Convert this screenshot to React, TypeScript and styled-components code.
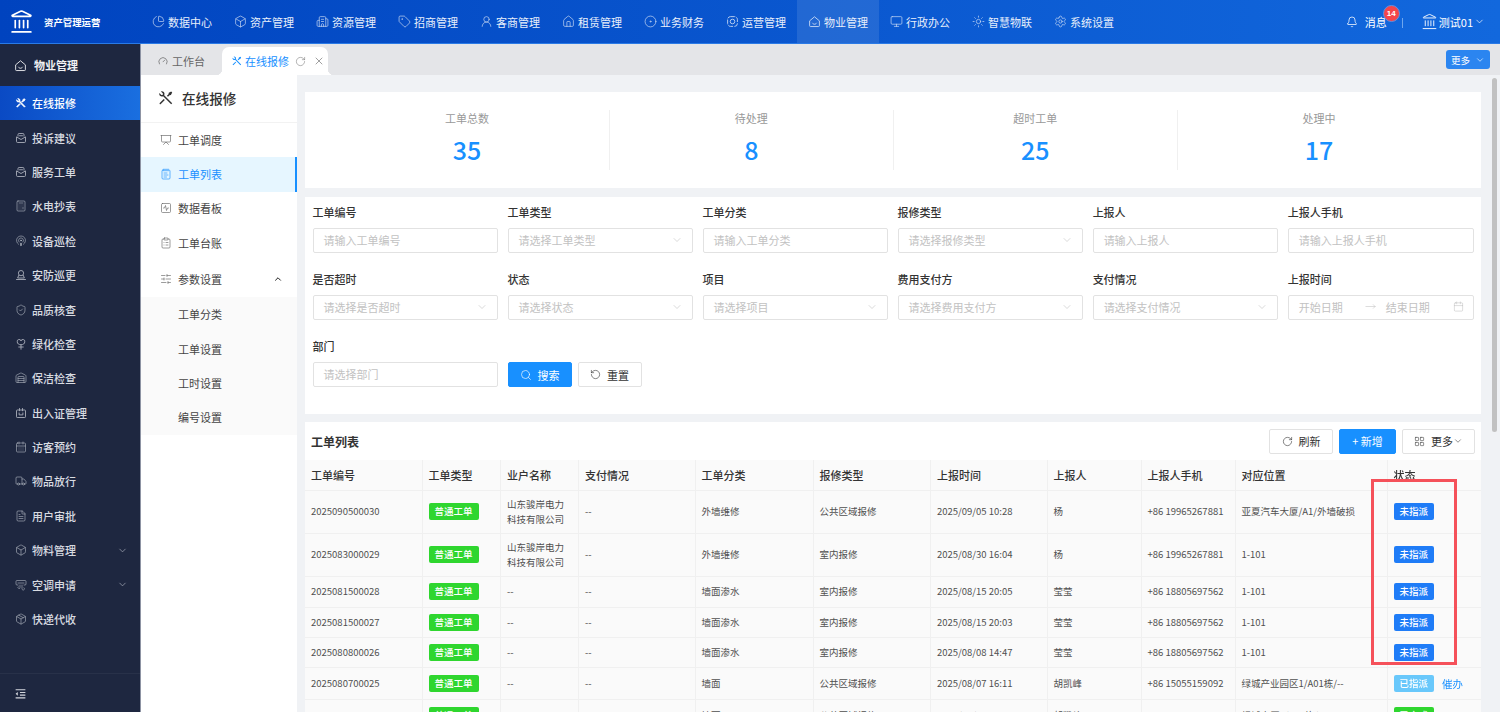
import React from "react";
import styled, { createGlobalStyle } from "styled-components";
import {
  AirVent, Box, Building2, Calculator, Calendar, CalendarDays, ChartPie, ChevronDown, ChevronUp,
  CircleDot, ClipboardList, FileText, Gauge, Landmark, LayoutGrid, MoveRight, NotepadText,
  Package, Podcast, Presentation, RotateCcw, RotateCw, Search, Settings,
  ShieldCheck, SlidersHorizontal, SquareActivity, Bell, Sun, Tag, Truck, UserRound,
  Warehouse, X, House, Monitor,
} from "lucide-react";
import { RiIndentDecrease, RiToolsLine } from "react-icons/ri";

type IconType = React.ComponentType<{ size?: number; strokeWidth?: number }>;

const HouseSmile: IconType = ({ size = 14 }) => (
  <svg width={size} height={size} viewBox="0 0 16 16" fill="none" stroke="currentColor" strokeWidth="1.1">
    <path d="M2 7.2 8 2.2l6 5v6a1 1 0 0 1-1 1H3a1 1 0 0 1-1-1z" strokeLinejoin="round" />
    <path d="M5.5 10c.8 1 1.6 1.4 2.5 1.4s1.7-.4 2.5-1.4" strokeLinecap="round" />
  </svg>
);

const OpsIcon: IconType = ({ size = 14 }) => (
  <svg width={size} height={size} viewBox="0 0 16 16" fill="none" stroke="currentColor" strokeWidth="1.1">
    <rect x="2" y="2" width="12" height="12" rx="3.5" strokeDasharray="6 1.5" />
    <circle cx="8" cy="8" r="2.8" />
  </svg>
);

const MailTray: IconType = ({ size = 14 }) => (
  <svg width={size} height={size} viewBox="0 0 16 16" fill="none" stroke="currentColor" strokeWidth="1.2">
    <path d="M4 6V3.5A1.5 1.5 0 0 1 5.5 2h5A1.5 1.5 0 0 1 12 3.5V6" />
    <path d="M2 6.5 8 10l6-3.5V12.5A1.5 1.5 0 0 1 12.500 14h-9A1.500 1.500 0 0 1 2 12.500z" strokeLinejoin="round" />
    <path d="M5.500 5h5" />
  </svg>
);

const GuardIcon: IconType = ({ size = 14 }) => (
  <svg width={size} height={size} viewBox="0 0 16 16" fill="none" stroke="currentColor" strokeWidth="1.2">
    <circle cx="8" cy="5.500" r="3.500" />
    <path d="M5 8.500 3.500 12h9L11 8.500M2 14h12" strokeLinecap="round" strokeLinejoin="round" />
  </svg>
);

const PlantIcon: IconType = ({ size = 14 }) => (
  <svg width={size} height={size} viewBox="0 0 16 16" fill="none" stroke="currentColor" strokeWidth="1.2">
    <path d="M8 9C5 9 3 7.500 3 5a2.500 2.500 0 0 1 5-1 2.500 2.500 0 0 1 5 1c0 2.500-2 4-5 4z" />
    <path d="M8 9v6M5 12h6" strokeLinecap="round" />
  </svg>
);

const PassIcon: IconType = ({ size = 14 }) => (
  <svg width={size} height={size} viewBox="0 0 16 16" fill="none" stroke="currentColor" strokeWidth="1.2">
    <rect x="2" y="4" width="12" height="10" rx="1" />
    <path d="M6 2v3M10 2v3M5.500 8v2.500h5V8" strokeLinecap="round" />
  </svg>
);

const GlobalStyle = createGlobalStyle`
  html, body, #root { margin: 0; height: 100%; overflow: hidden; }
  body {
    font-family: "Noto Sans CJK SC", "Noto Sans", sans-serif;
    font-size: 11px;
    color: #333;
  }
  * { box-sizing: border-box; }
`;

const Page = styled.div`
  height: 100vh;
  display: flex;
  flex-direction: column;
`;

/* top bar */
const Header = styled.header`
  height: 44px;
  flex: none;
  display: flex;
  align-items: stretch;
  color: #fff;
  background: linear-gradient(90deg, #0043bf, #1268dd);
  border-bottom: 1px solid #2a7ae6;
`;

const Brand = styled.div`
  width: 141px;
  flex: none;
  display: flex;
  align-items: center;
  gap: 10px;
  padding-left: 9px;
  font-size: 9.4px;
  font-weight: 700;
  white-space: nowrap;
`;

const TopNav = styled.nav`
  display: flex;
`;

const TopItem = styled.a<{ $active?: boolean }>`
  width: 82px;
  display: flex;
  align-items: center;
  gap: 3px;
  padding-left: 11px;
  white-space: nowrap;
  color: #e8effb;
  background: ${(p) => (p.$active ? "rgba(255,255,255,.1)" : "transparent")};
  svg { opacity: .85; flex: none; }
`;

const HeaderRight = styled.div`
  margin-left: auto;
  display: flex;
  align-items: center;
  padding-right: 15px;
`;

const MessageLink = styled.div`
  position: relative;
  display: flex;
  align-items: center;
  gap: 7px;
  padding-right: 16px;
  margin-right: 18px;
  &::after {
    content: "";
    position: absolute;
    right: 0;
    top: 4px;
    height: 10px;
    width: 1px;
    background: #6ea6ee;
  }
`;

const Badge = styled.span`
  position: absolute;
  right: 3px;
  top: -9px;
  width: 17px;
  height: 17px;
  border-radius: 50%;
  background: #f5454b;
  border: 1px solid #5b93e6;
  font: 700 8px/15px "Liberation Sans", sans-serif;
  text-align: center;
`;

const UserMenu = styled.div`
  display: flex;
  align-items: center;
  gap: 1px;
`;

/* dark side menu */
const Body = styled.div`
  flex: 1;
  min-height: 0;
  display: flex;
`;

const Sidebar = styled.aside`
  width: 141px;
  flex: none;
  display: flex;
  flex-direction: column;
  background: #1e2740;
  border-right: 1px solid #8d93a3;
  color: #d3d6dd;
`;

const SideHead = styled.div`
  height: 42px;
  flex: none;
  display: flex;
  align-items: center;
  gap: 7px;
  padding-left: 14px;
  font-weight: 700;
  color: #f0f1f4;
`;

const SideList = styled.div`
  flex: 1;
`;

const SideItem = styled.a<{ $active?: boolean }>`
  height: 34.4px;
  display: flex;
  align-items: center;
  gap: 5px;
  padding: 0 12px 0 15px;
  font-weight: 500;
  color: ${(p) => (p.$active ? "#fff" : "#d8dbe1")};
  background: ${(p) => (p.$active ? "linear-gradient(90deg, #0a4ac4, #1a6fe0)" : "transparent")};
  svg { color: ${(p) => (p.$active ? "#fff" : "#a9aeba")}; flex: none; }
  svg:last-child:not(:first-child) { margin-left: auto; }
`;

const SideFoot = styled.div`
  height: 39px;
  flex: none;
  display: flex;
  align-items: center;
  padding-left: 14px;
  border-top: 1px solid #283149;
`;

/* tab strip */
const Right = styled.div`
  flex: 1;
  min-width: 0;
  display: flex;
  flex-direction: column;
`;

const TabBar = styled.div`
  height: 31px;
  flex: none;
  display: flex;
  align-items: flex-end;
  padding-left: 7px;
  gap: 8px;
  background: #e4e5e8;
  position: relative;
`;

const Tab = styled.div`
  height: 28px;
  width: 66px;
  display: flex;
  align-items: center;
  gap: 4px;
  padding-left: 10px;
  color: #666;
  svg { color: #555; }
`;

const ActiveTab = styled.div`
  position: relative;
  height: 28px;
  width: 106px;
  display: flex;
  align-items: center;
  padding-left: 9px;
  background: #fff;
  border-radius: 7px 7px 0 0;
  color: #1890ff;
  &::before, &::after {
    content: "";
    position: absolute;
    bottom: 0;
    width: 6px;
    height: 6px;
  }
  &::before { left: -6px; background: radial-gradient(circle at 0 0, transparent 6px, #fff 6.5px); }
  &::after { right: -6px; background: radial-gradient(circle at 100% 0, transparent 6px, #fff 6.5px); }
`;

const TabTitle = styled.span`
  margin: 0 6px 0 2px;
  white-space: nowrap;
`;

const TabTool = styled.span`
  display: flex;
  color: #777;
  & + & { margin-left: 7px; }
`;

const MoreTabs = styled.button`
  position: absolute;
  right: 10px;
  top: 6px;
  width: 44px;
  height: 19px;
  display: flex;
  align-items: center;
  justify-content: center;
  gap: 5px;
  border: 0;
  border-radius: 3px;
  background: #2b85f0;
  color: #fff;
  font: inherit;
  font-size: 9.5px;
  padding: 0;
`;

/* second level menu */
const Workspace = styled.div`
  position: relative;
  flex: 1;
  min-height: 0;
  display: flex;
`;

const SubMenu = styled.div`
  width: 156px;
  flex: none;
  background: #fff;
`;

const SubTitle = styled.div`
  height: 48px;
  display: flex;
  align-items: center;
  gap: 7px;
  padding: 0 0 2px 16px;
  font-size: 13.6px;
  font-weight: 500;
  color: #333;
  border-bottom: 1px solid #f2f2f2;
`;

const SubItem = styled.a<{ $active?: boolean }>`
  height: 34.4px;
  display: flex;
  align-items: center;
  gap: 6px;
  padding: 0 12px 1px 19px;
  color: ${(p) => (p.$active ? "#1890ff" : "#444")};
  background: ${(p) => (p.$active ? "#e6f6ff" : "transparent")};
  border-right: 2px solid ${(p) => (p.$active ? "#1890ff" : "transparent")};
  svg { color: ${(p) => (p.$active ? "#1890ff" : "#666")}; flex: none; }
`;

const SubGroupHead = styled(SubItem)`
  margin-top: 2px;
  svg:last-child { margin-left: auto; color: #222; }
`;

const SubChildren = styled.div`
  background: #fafafa;
`;

const SubChild = styled.a`
  height: 34.4px;
  display: flex;
  align-items: center;
  padding-left: 37px;
  color: #444;
`;

/* page content */
const Main = styled.main`
  flex: 1;
  min-width: 0;
  overflow-y: auto;
  padding: 17px 19.5px 0 8px;
  background: #f0f2f5;
`;

const ScrollThumb = styled.div`
  position: absolute;
  top: 3px;
  right: 3px;
  width: 5px;
  height: 354px;
  border-radius: 3px;
  background: #c1c1c1;
`;

const StatCard = styled.section`
  height: 96px;
  display: grid;
  grid-template-columns: repeat(4, 1fr);
  padding: 18px 20px;
  background: #fff;
`;

const Stat = styled.div`
  display: flex;
  flex-direction: column;
  align-items: center;
  & + & { border-left: 1px solid #f0f0f0; }
`;

const StatLabel = styled.div`
  color: #999;
  line-height: 16px;
`;

const StatValue = styled.div`
  margin-top: 5px;
  font-size: 25px;
  line-height: 36px;
  font-weight: 500;
  color: #1890ff;
`;

const FilterCard = styled.section`
  margin-top: 9px;
  display: grid;
  grid-template-columns: repeat(6, 1fr);
  gap: 19px 9.2px;
  padding: 8px 7px 27px 7.5px;
  background: #fff;
`;

const Field = styled.div`
  min-width: 0;
`;

const FieldLabel = styled.div`
  height: 16px;
  line-height: 14px;
  margin-bottom: 7px;
  font-weight: 500;
  color: #333;
`;

const InputBox = styled.div`
  height: 25px;
  display: flex;
  align-items: center;
  padding: 0 9px 2px 10px;
  border: 1px solid #e2e2e2;
  border-radius: 2px;
  color: #c2c2c2;
  white-space: nowrap;
  svg { margin-left: auto; color: #b5b5b5; flex: none; }
`;

const DatePart = styled.span`
  width: 66px;
  &:nth-of-type(2) { margin-left: 10px; }
`;

const DateArrow = styled(MoveRight)`
  && { margin: 0; }
`;

const Actions = styled.div`
  grid-column: span 5;
  align-self: end;
  display: flex;
  gap: 6px;
`;

const Button = styled.button<{ $primary?: boolean; $w: number }>`
  width: ${(p) => p.$w}px;
  height: 25px;
  display: inline-flex;
  align-items: center;
  justify-content: center;
  gap: 6px;
  padding: 0;
  border: 1px solid ${(p) => (p.$primary ? "#1890ff" : "#e2e2e2")};
  border-radius: 2px;
  background: ${(p) => (p.$primary ? "#1890ff" : "#fff")};
  color: ${(p) => (p.$primary ? "#fff" : "#333")};
  font: inherit;
`;

const MoreCaret = styled(ChevronDown)`
  margin-left: -6px;
`;

const TableCard = styled.section`
  position: relative;
  margin-top: 8px;
  min-height: 788px;
  background: #fff;
`;

const TableHead = styled.div`
  height: 38px;
  display: flex;
  align-items: center;
  justify-content: space-between;
  padding: 0 5.5px 0 6px;
`;

const TableTitle = styled.h3`
  margin: 0;
  font-size: 12px;
  font-weight: 700;
  color: #333;
`;

const Toolbar = styled.div`
  display: flex;
  gap: 6px;
`;

const Table = styled.table`
  width: 100%;
  table-layout: fixed;
  border-collapse: collapse;
  font-size: 9.5px;
`;

const Th = styled.th`
  height: 30px;
  padding: 0 6px;
  text-align: left;
  font-size: 11px;
  font-weight: 500;
  color: #333;
  background: #fafafa;
  border-right: 1px solid #f0f0f0;
  border-bottom: 1px solid #f0f0f0;
`;

const Row = styled.tr<{ $h: number }>`
  height: ${(p) => p.$h}px;
`;

const Td = styled.td`
  padding: 0 6px;
  color: #505050;
  line-height: 15px;
  background: #fafafa;
  border-right: 1px solid #f0f0f0;
  border-bottom: 1px solid #f0f0f0;
  overflow: hidden;
  white-space: nowrap;
`;

const StatusTh = styled(Th)`
  position: sticky;
  right: 0;
  padding-left: 6px;
  border-right: 0;
  box-shadow: -3px 0 4px rgba(0, 0, 0, .15);
`;

const StatusTd = styled(Td)`
  position: sticky;
  right: 0;
  padding-left: 6px;
  border-right: 0;
  box-shadow: -3px 0 4px rgba(0, 0, 0, .15);
`;

const toneColors = { green: "#2fd62f", blue: "#1f7cf7", sky: "#69c8fb" };

const StatusTag = styled.span<{ $tone: keyof typeof toneColors }>`
  display: inline-block;
  height: 17px;
  padding: 0 6px;
  line-height: 17px;
  border-radius: 2px;
  background: ${(p) => toneColors[p.$tone]};
  color: #fff;
  font-size: 9.5px;
  font-weight: 500;
  vertical-align: middle;
`;

const UrgeLink = styled.a`
  margin-left: 8px;
  font-size: 10.5px;
  color: #1890ff;
  vertical-align: middle;
`;

const Wrapped = styled.div`
  white-space: normal;
`;

const Marker = styled.div`
  position: absolute;
  top: 57px;
  right: 23.5px;
  width: 86px;
  height: 186px;
  border: 3px solid #f5515a;
  pointer-events: none;
`;

const topNav: [string, IconType][] = [
  ["数据中心", ChartPie], ["资产管理", Box], ["资源管理", Building2], ["招商管理", Tag],
  ["客商管理", UserRound], ["租赁管理", House], ["业务财务", CircleDot], ["运营管理", OpsIcon],
  ["物业管理", HouseSmile], ["行政办公", Monitor], ["智慧物联", Sun], ["系统设置", Settings],
];

const sideNav: [string, IconType, boolean?][] = [
  ["在线报修", RiToolsLine], ["投诉建议", MailTray], ["服务工单", MailTray], ["水电抄表", Calculator],
  ["设备巡检", Podcast], ["安防巡更", GuardIcon], ["品质核查", ShieldCheck], ["绿化检查", PlantIcon],
  ["保洁检查", Warehouse], ["出入证管理", PassIcon], ["访客预约", CalendarDays], ["物品放行", Truck],
  ["用户审批", FileText], ["物料管理", Box, true], ["空调申请", AirVent, true], ["快递代收", Package],
];

const subNav: [string, IconType][] = [
  ["工单调度", Presentation], ["工单列表", NotepadText], ["数据看板", SquareActivity], ["工单台账", ClipboardList],
];

const stats = [["工单总数", "35"], ["待处理", "8"], ["超时工单", "25"], ["处理中", "17"]];

type FilterField = { label: string; hint: string; select?: boolean };

const filters: FilterField[] = [
  { label: "工单编号", hint: "请输入工单编号" },
  { label: "工单类型", hint: "请选择工单类型", select: true },
  { label: "工单分类", hint: "请输入工单分类" },
  { label: "报修类型", hint: "请选择报修类型", select: true },
  { label: "上报人", hint: "请输入上报人" },
  { label: "上报人手机", hint: "请输入上报人手机" },
  { label: "是否超时", hint: "请选择是否超时", select: true },
  { label: "状态", hint: "请选择状态", select: true },
  { label: "项目", hint: "请选择项目", select: true },
  { label: "费用支付方", hint: "请选择费用支付方", select: true },
  { label: "支付情况", hint: "请选择支付情况", select: true },
];

const columns: [string, number][] = [
  ["工单编号", 117], ["工单类型", 78.5], ["业户名称", 78], ["支付情况", 116.5], ["工单分类", 118],
  ["报修类型", 117.5], ["上报时间", 116.5], ["上报人", 94], ["上报人手机", 94], ["对应位置", 152],
];

const company = "山东骏岸电力科技有限公司";

type Order = {
  no: string; owner?: string; cat: string; kind: string; time: string; who: string; phone: string; place: string;
  status: string; tone: keyof typeof toneColors; urge?: boolean; h: number;
};

const orders: Order[] = [
  { no: "2025090500030", owner: company, cat: "外墙维修", kind: "公共区域报修", time: "2025/09/05 10:28", who: "杨", phone: "+86 19965267881", place: "亚夏汽车大厦/A1/外墙破损", status: "未指派", tone: "blue", h: 43 },
  { no: "2025083000029", owner: company, cat: "外墙维修", kind: "室内报修", time: "2025/08/30 16:04", who: "杨", phone: "+86 19965267881", place: "1-101", status: "未指派", tone: "blue", h: 43 },
  { no: "2025081500028", cat: "墙面渗水", kind: "室内报修", time: "2025/08/15 20:05", who: "莹莹", phone: "+86 18805697562", place: "1-101", status: "未指派", tone: "blue", h: 31 },
  { no: "2025081500027", cat: "墙面渗水", kind: "室内报修", time: "2025/08/15 20:03", who: "莹莹", phone: "+86 18805697562", place: "1-101", status: "未指派", tone: "blue", h: 30 },
  { no: "2025080800026", cat: "墙面渗水", kind: "室内报修", time: "2025/08/08 14:47", who: "莹莹", phone: "+86 18805697562", place: "1-101", status: "未指派", tone: "blue", h: 30.5 },
  { no: "2025080700025", cat: "墙面", kind: "公共区域报修", time: "2025/08/07 16:11", who: "胡凯峰", phone: "+86 15055159092", place: "绿城产业园区1/A01栋/--", status: "已指派", tone: "sky", urge: true, h: 32 },
  { no: "2025080700024", cat: "墙面", kind: "公共区域报修", time: "2025/08/07 10:32", who: "胡凯峰", phone: "+86 18805697562", place: "绿城大厦1/A01栋/A01B0201", status: "已完成", tone: "green", h: 32 },
];

export default function App() {
  return (
    <Page>
      <GlobalStyle />
      <Header>
        <Brand>
          <Landmark size={25} strokeWidth={1.6} />
          资产管理运营
        </Brand>
        <TopNav>
          {topNav.map(([label, Icon]) => (
            <TopItem key={label} $active={label === "物业管理"}>
              <Icon size={13} strokeWidth={1.3} />
              {label}
            </TopItem>
          ))}
        </TopNav>
        <HeaderRight>
          <MessageLink>
            <Bell size={12} strokeWidth={1.5} />
            消息
            <Badge>14</Badge>
          </MessageLink>
          <UserMenu>
            <Landmark size={17} strokeWidth={1.3} />
            测试01
            <ChevronDown size={11} strokeWidth={1.5} />
          </UserMenu>
        </HeaderRight>
      </Header>
      <Body>
        <Sidebar>
          <SideHead>
            <HouseSmile size={13} />
            物业管理
          </SideHead>
          <SideList>
            {sideNav.map(([label, Icon, more], i) => (
              <SideItem key={label} $active={i === 0}>
                <Icon size={12} strokeWidth={1.3} />
                {label}
                {more && <ChevronDown size={11} strokeWidth={1.5} />}
              </SideItem>
            ))}
          </SideList>
          <SideFoot>
            <RiIndentDecrease size={13} />
          </SideFoot>
        </Sidebar>
        <Right>
          <TabBar>
            <Tab>
              <Gauge size={10} strokeWidth={1.5} />
              工作台
            </Tab>
            <ActiveTab>
              <RiToolsLine size={12} />
              <TabTitle>在线报修</TabTitle>
              <TabTool><RotateCw size={11} strokeWidth={1.2} /></TabTool>
              <TabTool><X size={12} strokeWidth={1.4} /></TabTool>
            </ActiveTab>
            <MoreTabs>
              更多
              <ChevronDown size={10} strokeWidth={1.5} />
            </MoreTabs>
          </TabBar>
          <Workspace>
            <SubMenu>
              <SubTitle>
                <RiToolsLine size={18} />
                在线报修
              </SubTitle>
              {subNav.map(([label, Icon], i) => (
                <SubItem key={label} $active={i === 1}>
                  <Icon size={12} strokeWidth={1.3} />
                  {label}
                </SubItem>
              ))}
              <SubGroupHead>
                <SlidersHorizontal size={12} strokeWidth={1.3} />
                参数设置
                <ChevronUp size={10} strokeWidth={2.4} />
              </SubGroupHead>
              <SubChildren>
                {["工单分类", "工单设置", "工时设置", "编号设置"].map((label) => (
                  <SubChild key={label}>{label}</SubChild>
                ))}
              </SubChildren>
            </SubMenu>
            <Main>
              <StatCard>
                {stats.map(([label, value]) => (
                  <Stat key={label}>
                    <StatLabel>{label}</StatLabel>
                    <StatValue>{value}</StatValue>
                  </Stat>
                ))}
              </StatCard>
              <FilterCard>
                {filters.map((f) => (
                  <Field key={f.label}>
                    <FieldLabel>{f.label}</FieldLabel>
                    <InputBox>
                      {f.hint}
                      {f.select && <ChevronDown size={12} strokeWidth={1} />}
                    </InputBox>
                  </Field>
                ))}
                <Field>
                  <FieldLabel>上报时间</FieldLabel>
                  <InputBox>
                    <DatePart>开始日期</DatePart>
                    <DateArrow size={11} strokeWidth={1} />
                    <DatePart>结束日期</DatePart>
                    <Calendar size={11} strokeWidth={1} />
                  </InputBox>
                </Field>
                <Field>
                  <FieldLabel>部门</FieldLabel>
                  <InputBox>请选择部门</InputBox>
                </Field>
                <Actions>
                  <Button $primary $w={64}>
                    <Search size={12} strokeWidth={1.3} />
                    搜索
                  </Button>
                  <Button $w={64}>
                    <RotateCcw size={11} strokeWidth={1.3} />
                    重置
                  </Button>
                </Actions>
              </FilterCard>
              <TableCard>
                <TableHead>
                  <TableTitle>工单列表</TableTitle>
                  <Toolbar>
                    <Button $w={64}>
                      <RotateCw size={11} strokeWidth={1.3} />
                      刷新
                    </Button>
                    <Button $primary $w={57}>+ 新增</Button>
                    <Button $w={73}>
                      <LayoutGrid size={11} strokeWidth={1.2} />
                      <span>更多</span>
                      <MoreCaret size={10} strokeWidth={1.3} />
                    </Button>
                  </Toolbar>
                </TableHead>
                <Table>
                  <colgroup>
                    {columns.map(([label, w]) => (
                      <col key={label} width={w} />
                    ))}
                    <col />
                  </colgroup>
                  <thead>
                    <tr>
                      {columns.map(([label]) => (
                        <Th key={label}>{label}</Th>
                      ))}
                      <StatusTh>状态</StatusTh>
                    </tr>
                  </thead>
                  <tbody>
                    {orders.map((o) => (
                      <Row key={o.no} $h={o.h}>
                        <Td>{o.no}</Td>
                        <Td><StatusTag $tone="green">普通工单</StatusTag></Td>
                        <Td>{o.owner ? <Wrapped>{o.owner}</Wrapped> : "--"}</Td>
                        <Td>--</Td>
                        <Td>{o.cat}</Td>
                        <Td>{o.kind}</Td>
                        <Td>{o.time}</Td>
                        <Td>{o.who}</Td>
                        <Td>{o.phone}</Td>
                        <Td>{o.place}</Td>
                        <StatusTd>
                          <StatusTag $tone={o.tone}>{o.status}</StatusTag>
                          {o.urge && <UrgeLink>催办</UrgeLink>}
                        </StatusTd>
                      </Row>
                    ))}
                  </tbody>
                </Table>
                <Marker />
              </TableCard>
            </Main>
            <ScrollThumb />
          </Workspace>
        </Right>
      </Body>
    </Page>
  );
}
